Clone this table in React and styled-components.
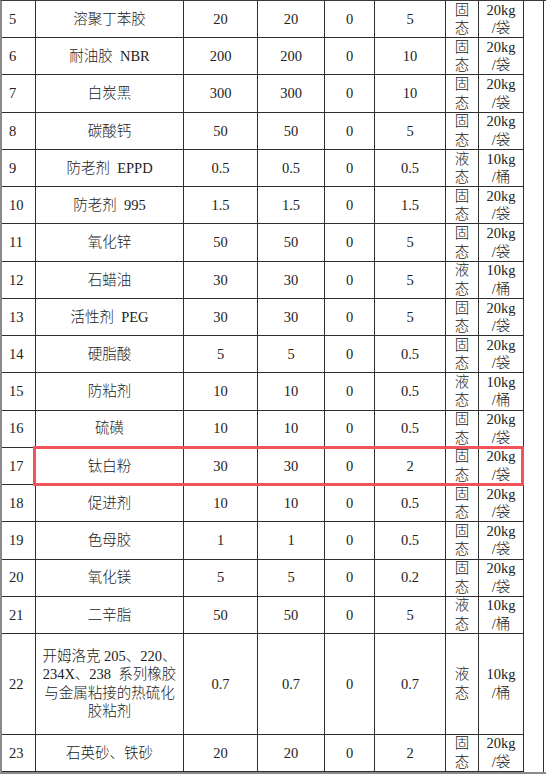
import React from "react";
import styled, { createGlobalStyle } from "styled-components";

const GlobalStyle = createGlobalStyle`
  html, body {
    margin: 0;
    padding: 0;
    background: #fff;
    overflow: hidden;
  }
  body {
    font-family: "Liberation Serif", "Noto Sans CJK SC", serif;
    color: #222;
  }
`;

const Page = styled.div`
  position: relative;
  width: 546px;
  height: 774px;
  overflow: hidden;
  background: #fff;
`;

const Grid = styled.div`
  display: grid;
  width: 544px;
  grid-template-columns: 34px 148px 74px 67px 50px 71px 33px 45px 20px;
  grid-template-rows: repeat(17, 37.24px) 101px 37px;
  border-top: 1px solid #3a3a3a;
  border-left: 2px solid #8a8a8a;
  border-bottom: 3px solid #8a8a8a;
`;

const Cell = styled.div`
  box-sizing: border-box;
  display: flex;
  align-items: center;
  justify-content: ${(p) => (p.$left ? "flex-start" : "center")};
  padding-left: ${(p) => (p.$left ? "7px" : "0")};
  text-align: center;
  border-right: 1px solid #2e2e2e;
  border-bottom: 1px solid #2e2e2e;
  font-size: 14.5px;
  font-weight: 300;
  line-height: 18.5px;
  white-space: nowrap;
  overflow: hidden;
`;

/* right-hand column of the sheet: one merged cell down the whole crop */
const SpanCell = styled.div`
  box-sizing: border-box;
  grid-column: 9;
  grid-row: 1 / -1;
  border-right: 1px solid #2e2e2e;
`;

const Highlight = styled.div`
  position: absolute;
  left: 33px;
  top: 446px;
  width: 491px;
  height: 40px;
  box-sizing: border-box;
  border: 3px solid #f0545a;
  border-radius: 1px;
  pointer-events: none;
`;

const SOLID = ["固", "态"];
const LIQUID = ["液", "态"];
const BAG = ["20kg", "/袋"];
const DRUM = ["10kg", "/桶"];

const rows = [
  ["5", ["溶聚丁苯胶"], "20", "20", "0", "5", SOLID, BAG],
  ["6", ["耐油胶\u00a0 NBR"], "200", "200", "0", "10", SOLID, BAG],
  ["7", ["白炭黑"], "300", "300", "0", "10", SOLID, BAG],
  ["8", ["碳酸钙"], "50", "50", "0", "5", SOLID, BAG],
  ["9", ["防老剂\u00a0 EPPD"], "0.5", "0.5", "0", "0.5", LIQUID, DRUM],
  ["10", ["防老剂\u00a0 995"], "1.5", "1.5", "0", "1.5", SOLID, BAG],
  ["11", ["氧化锌"], "50", "50", "0", "5", SOLID, BAG],
  ["12", ["石蜡油"], "30", "30", "0", "5", LIQUID, DRUM],
  ["13", ["活性剂\u00a0 PEG"], "30", "30", "0", "5", SOLID, BAG],
  ["14", ["硬脂酸"], "5", "5", "0", "0.5", SOLID, BAG],
  ["15", ["防粘剂"], "10", "10", "0", "0.5", LIQUID, DRUM],
  ["16", ["硫磺"], "10", "10", "0", "0.5", SOLID, BAG],
  ["17", ["钛白粉"], "30", "30", "0", "2", SOLID, BAG],
  ["18", ["促进剂"], "10", "10", "0", "0.5", SOLID, BAG],
  ["19", ["色母胶"], "1", "1", "0", "0.5", SOLID, BAG],
  ["20", ["氧化镁"], "5", "5", "0", "0.2", SOLID, BAG],
  ["21", ["二辛脂"], "50", "50", "0", "5", LIQUID, DRUM],
  [
    "22",
    ["开姆洛克 205、220、", "234X、238\u00a0 系列橡胶", "与金属粘接的热硫化", "胶粘剂"],
    "0.7",
    "0.7",
    "0",
    "0.7",
    LIQUID,
    DRUM,
  ],
  ["23", ["石英砂、铁砂"], "20", "20", "0", "2", SOLID, BAG],
];

function Lines({ items }) {
  return (
    <div>
      {items.map((t, i) => (
        <React.Fragment key={i}>
          {i > 0 && <br />}
          {t}
        </React.Fragment>
      ))}
    </div>
  );
}

export default function App() {
  return (
    <Page>
      <GlobalStyle />
      <Grid>
        <SpanCell />
        {rows.map(([no, name, a, b, c, d, state, pack]) => (
          <React.Fragment key={no}>
            <Cell $left>{no}</Cell>
            <Cell>
              <Lines items={name} />
            </Cell>
            <Cell>{a}</Cell>
            <Cell>{b}</Cell>
            <Cell>{c}</Cell>
            <Cell>{d}</Cell>
            <Cell>
              <Lines items={state} />
            </Cell>
            <Cell>
              <Lines items={pack} />
            </Cell>
          </React.Fragment>
        ))}
      </Grid>
      <Highlight />
    </Page>
  );
}
